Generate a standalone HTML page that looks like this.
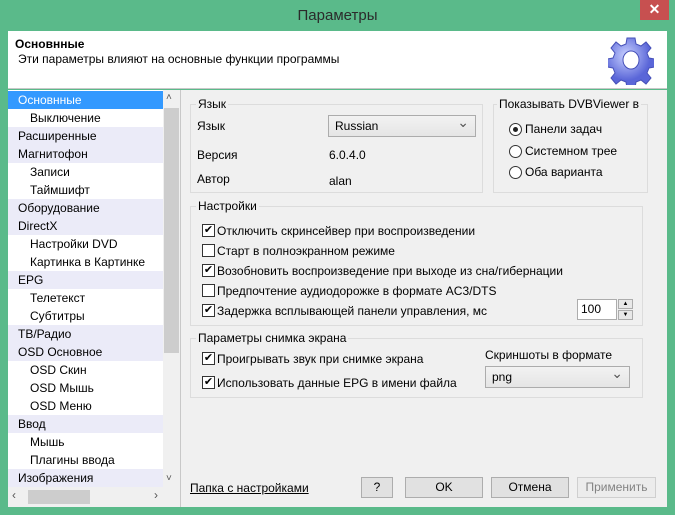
<!DOCTYPE html>
<html><head><meta charset="utf-8"><style>
*{box-sizing:border-box;margin:0;padding:0}
body{width:675px;height:515px;background:#5aba8a;font-family:"Liberation Sans",sans-serif;font-size:12px;color:#000;position:relative;overflow:hidden}
.a{position:absolute}
.title{left:0;top:0;width:675px;height:31px;text-align:center;line-height:32px;font-size:15px;color:#2b2b2b}
.close{left:640px;top:0;width:29px;height:20px;background:#c75050;color:#fff;text-align:center;line-height:19px;font-size:14px;font-weight:bold}
.hdr{left:8px;top:31px;width:659px;height:58px;background:#fff;border-bottom:1px solid #c8c8c8}
.main{left:8px;top:90px;width:659px;height:417px;background:#f0f0f0}
.list{left:8px;top:90px;width:155px;height:397px;background:#fff}
.row{position:absolute;left:0;width:155px;height:18px;line-height:18px;padding-left:10px}
.lav{background:#ebebf8}
.sub{padding-left:22px}
.sel{background:#3399ff;color:#fff}
.vs{left:163px;top:90px;width:17px;height:397px;background:#f0f0f0}
.sep{left:180px;top:90px;width:1px;height:417px;background:#c8c8c8}
.g{position:absolute;border:1px solid #dcdcdc}
.gl{position:absolute;background:#f0f0f0;padding:0 2px;top:-9px;left:5px;line-height:16px}
.cb{position:absolute;width:13px;height:13px;border:1px solid #333;background:#fff;font-size:11px;line-height:11px;text-align:center}
.t{position:absolute;white-space:nowrap}
.rd{position:absolute;width:13px;height:13px;border:1px solid #333;border-radius:50%;background:#fff}
.btn{position:absolute;height:21px;border:1px solid #adadad;background:#e1e1e1;text-align:center;line-height:19px}
.combo{position:absolute;border:1px solid #acacac;background:linear-gradient(#f2f2f2,#e5e5e5);height:22px;line-height:20px;padding-left:6px}
.combo:after{content:"⌄";position:absolute;right:6px;top:-4px;color:#555;font-size:14px}
</style></head><body>
<div class="a title">Параметры</div>
<div class="a close">✕</div>
<div class="a hdr">
 <div class="t" style="left:7px;top:6px;font-weight:bold">Основнные</div>
 <div class="t" style="left:10px;top:21px">Эти параметры влияют на основные функции программы</div>
 <svg class="a" style="left:600px;top:4px" width="46" height="50" viewBox="0 0 46 50"><defs><radialGradient id="gg" cx="40%" cy="35%"><stop offset="0" stop-color="#c8d0ff"/><stop offset="1" stop-color="#5a66d8"/></radialGradient></defs>
 <g fill="url(#gg)" stroke="#4650b8" stroke-width="1"><path d="M19 3h8l1 6 5 2 5-4 5 6-4 5 2 5 6 1v8l-6 1-2 5 4 5-5 6-5-4-5 2-1 6h-8l-1-6-5-2-5 4-5-6 4-5-2-5-6-1v-8l6-1 2-5-4-5 5-6 5 4 5-2z"/></g>
 <ellipse cx="23" cy="25" rx="8" ry="9" fill="#fff" stroke="#4650b8"/></svg>
</div>
<div class="a main"></div>
<div class="a list">
 <div class="row sel" style="top:1px">Основнные</div>
 <div class="row sub" style="top:19px">Выключение</div>
 <div class="row lav" style="top:37px">Расширенные</div>
 <div class="row lav" style="top:55px">Магнитофон</div>
 <div class="row sub" style="top:73px">Записи</div>
 <div class="row sub" style="top:91px">Таймшифт</div>
 <div class="row lav" style="top:109px">Оборудование</div>
 <div class="row lav" style="top:127px">DirectX</div>
 <div class="row sub" style="top:145px">Настройки DVD</div>
 <div class="row sub" style="top:163px">Картинка в Картинке</div>
 <div class="row lav" style="top:181px">EPG</div>
 <div class="row sub" style="top:199px">Телетекст</div>
 <div class="row sub" style="top:217px">Субтитры</div>
 <div class="row lav" style="top:235px">ТВ/Радио</div>
 <div class="row lav" style="top:253px">OSD Основное</div>
 <div class="row sub" style="top:271px">OSD Скин</div>
 <div class="row sub" style="top:289px">OSD Мышь</div>
 <div class="row sub" style="top:307px">OSD Меню</div>
 <div class="row lav" style="top:325px">Ввод</div>
 <div class="row sub" style="top:343px">Мышь</div>
 <div class="row sub" style="top:361px">Плагины ввода</div>
 <div class="row lav" style="top:379px">Изображения</div>
</div>
<div class="a vs"><div class="a" style="left:3px;top:2px;font-size:10px;color:#555">˄</div><div class="a" style="left:1px;top:18px;width:15px;height:245px;background:#cdcdcd"></div><div class="a" style="left:3px;top:383px;font-size:10px;color:#555">˅</div></div>
<div class="a" style="left:8px;top:487px;width:172px;height:20px;background:#f0f0f0"><div class="a" style="left:20px;top:3px;width:62px;height:14px;background:#cdcdcd"></div><div class="a" style="left:4px;top:1px;color:#555">‹</div><div class="a" style="left:146px;top:1px;color:#555">›</div></div>
<div class="a sep"></div>

<div class="g" style="left:190px;top:104px;width:293px;height:89px"><div class="gl">Язык</div></div>
<div class="t" style="left:197px;top:119px">Язык</div>
<div class="combo" style="left:328px;top:115px;width:148px">Russian</div>
<div class="t" style="left:197px;top:148px">Версия</div>
<div class="t" style="left:329px;top:148px">6.0.4.0</div>
<div class="t" style="left:197px;top:172px">Автор</div>
<div class="t" style="left:329px;top:174px">alan</div>

<div class="g" style="left:493px;top:104px;width:155px;height:89px"><div class="gl" style="left:3px">Показывать DVBViewer в</div></div>
<div class="rd" style="left:509px;top:123px"><div class="a" style="left:3px;top:3px;width:5px;height:5px;border-radius:50%;background:#222"></div></div>
<div class="t" style="left:525px;top:122px">Панели задач</div>
<div class="rd" style="left:509px;top:145px"></div>
<div class="t" style="left:525px;top:144px">Системном трее</div>
<div class="rd" style="left:509px;top:166px"></div>
<div class="t" style="left:525px;top:165px">Оба варианта</div>

<div class="g" style="left:190px;top:206px;width:453px;height:120px"><div class="gl">Настройки</div></div>
<div class="cb" style="left:202px;top:224px">✔</div><div class="t" style="left:217px;top:224px">Отключить скринсейвер при воспроизведении</div>
<div class="cb" style="left:202px;top:244px"></div><div class="t" style="left:217px;top:244px">Старт в полноэкранном режиме</div>
<div class="cb" style="left:202px;top:264px">✔</div><div class="t" style="left:217px;top:264px">Возобновить воспроизведение при выходе из сна/гибернации</div>
<div class="cb" style="left:202px;top:284px"></div><div class="t" style="left:217px;top:284px">Предпочтение аудиодорожке в формате AC3/DTS</div>
<div class="cb" style="left:202px;top:304px">✔</div><div class="t" style="left:217px;top:304px">Задержка всплывающей панели управления, мс</div>
<div class="a" style="left:577px;top:299px;width:40px;height:21px;background:#fff;border:1px solid #acacac;padding:3px 3px;line-height:13px">100</div>
<div class="a" style="left:618px;top:299px;width:15px;height:10px;border:1px solid #acacac;background:#e8e8e8;font-size:6px;text-align:center;line-height:8px">▲</div>
<div class="a" style="left:618px;top:310px;width:15px;height:10px;border:1px solid #acacac;background:#e8e8e8;font-size:6px;text-align:center;line-height:8px">▼</div>

<div class="g" style="left:190px;top:338px;width:453px;height:60px"><div class="gl">Параметры снимка экрана</div></div>
<div class="cb" style="left:202px;top:352px">✔</div><div class="t" style="left:217px;top:352px">Проигрывать звук при снимке экрана</div>
<div class="cb" style="left:202px;top:376px">✔</div><div class="t" style="left:217px;top:376px">Использовать данные EPG в имени файла</div>
<div class="t" style="left:485px;top:348px">Скриншоты в формате</div>
<div class="combo" style="left:485px;top:366px;width:145px">png</div>

<div class="t" style="left:190px;top:481px;text-decoration:underline">Папка с настройками</div>
<div class="btn" style="left:361px;top:477px;width:32px">?</div>
<div class="btn" style="left:405px;top:477px;width:78px">OK</div>
<div class="btn" style="left:491px;top:477px;width:78px">Отмена</div>
<div class="btn" style="left:577px;top:477px;width:79px;color:#838383;background:#ececec;border-color:#cfcfcf">Применить</div>
</body></html>
